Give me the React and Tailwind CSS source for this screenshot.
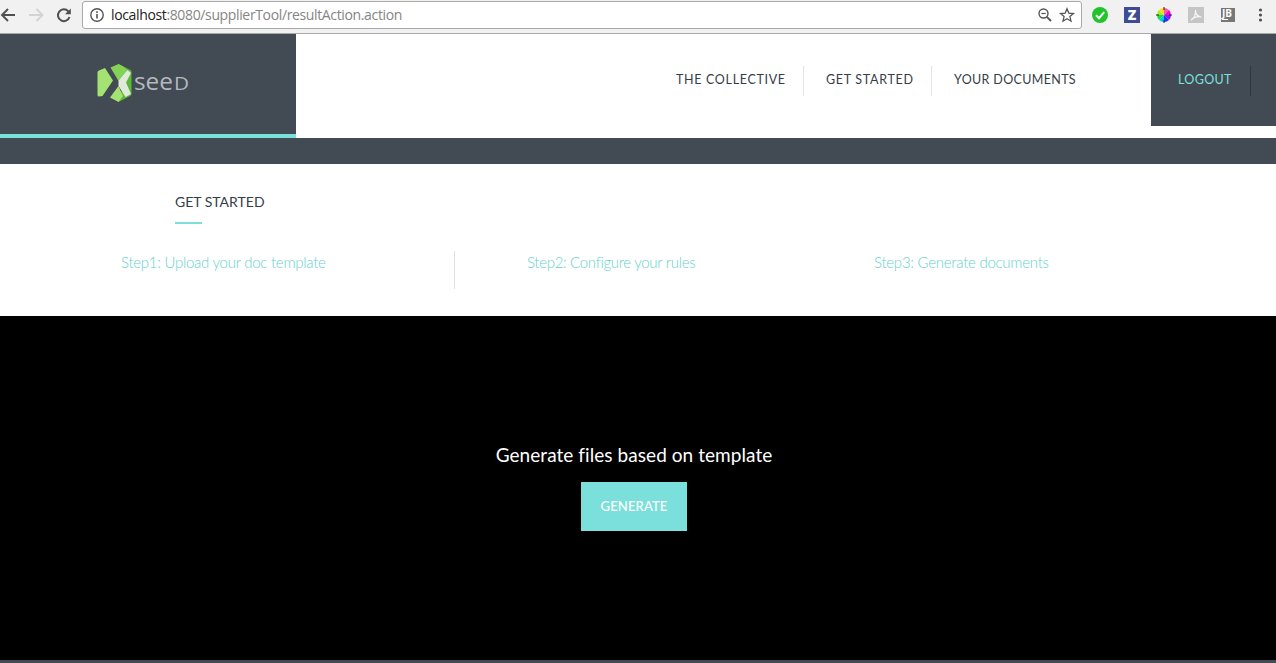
import React from "react";

function BrowserBar() {
  return (
    <div className="flex h-[34px] items-start border-b border-[#a9a9a9] bg-[#f1f1f1]">
      <svg className="h-[33px] w-[82px] shrink-0" viewBox="0 0 82 33" fill="none">
        <path d="M15 15H2.5M8 9L2 15L8 21" stroke="#505050" strokeWidth="1.9" />
        <path d="M29 15H42M36.500 9L42.500 15L36.500 21" stroke="#d3d3d3" strokeWidth="1.9" />
        <path d="M68.300 11.300A5.900 5.900 0 1 0 69.500 17" stroke="#505050" strokeWidth="2" />
        <path d="M70.800 8.500V14.300H65Z" fill="#505050" />
      </svg>
      <div className="mt-px flex h-[28px] w-[1000px] shrink-0 items-center rounded-[3px] border border-[#a9a9a9] bg-white">
        <svg className="ml-[6px] h-4 w-4 shrink-0" viewBox="0 0 16 16" fill="none">
          <circle cx="8" cy="8" r="6.200" stroke="#555" strokeWidth="1.400" />
          <path d="M8 7V11.500M8 4.300V5.900" stroke="#555" strokeWidth="1.600" />
        </svg>
        <span className="ml-[6px] whitespace-nowrap font-['Open_Sans',sans-serif] text-[14px] leading-[20px] tracking-[-0.36px] text-[#858585]">
          <span className="text-[#222]">localhost</span>:8080/supplierTool/resultAction.action
        </span>
        <svg className="-mr-px ml-auto h-[26px] w-[46px] shrink-0" viewBox="0 0 46 26" fill="none" stroke="#555">
          <circle cx="7.500" cy="11.500" r="4.500" strokeWidth="1.400" />
          <path d="M5.300 11.500H9.700" strokeWidth="1.200" />
          <path d="M10.800 14.800L15 19" strokeWidth="1.900" />
          <path d="M31 6.700L32.800 11.100L37.500 11.500L33.900 14.600L35 19.200L31 16.700L27 19.200L28.100 14.600L24.500 11.500L29.200 11.100Z" strokeWidth="1.300" />
        </svg>
      </div>
      <div className="ml-[10px] flex h-[30px] w-[184px] items-center">
        <svg className="h-4 w-4 shrink-0" viewBox="0 0 16 16">
          <circle cx="8" cy="8" r="8" fill="#21c52b" />
          <path d="M4 8.300L7 11.200L12.200 5.200" fill="none" stroke="#fff" strokeWidth="2" />
        </svg>
        <span className="ml-4 flex h-4 w-4 shrink-0 items-center justify-center bg-[#3f4b93] font-['Open_Sans',sans-serif] text-[14px] font-extrabold leading-none text-white">Z</span>
        <svg className="ml-4 h-4 w-4 shrink-0" viewBox="0 0 16 16">
          <path d="M8 8V1A7 7 0 0 1 13 3Z" fill="#ff5a9c" />
          <path d="M8 8L13 3A7 7 0 0 1 15 8Z" fill="#ff00d4" />
          <path d="M8 8H15A7 7 0 0 1 13 13Z" fill="#8b16ff" />
          <path d="M8 8L13 13A7 7 0 0 1 8 15Z" fill="#1739ff" />
          <path d="M8 8V15A7 7 0 0 1 3 13Z" fill="#00c8f0" />
          <path d="M8 8L3 13A7 7 0 0 1 1 8Z" fill="#18df4b" />
          <path d="M8 8H1A7 7 0 0 1 3 3Z" fill="#a8ee18" />
          <path d="M8 8L3 3A7 7 0 0 1 8 1Z" fill="#ffd52b" />
          <path d="M8 0V3M8 13V16M0 8H3M13 8H16" stroke="#222" />
        </svg>
        <svg className="ml-4 h-4 w-4 shrink-0" viewBox="0 0 16 16">
          <path d="M0 0H16V16H0Z" fill="#c5c5c5" />
          <path d="M3 13C6 12 8 7 7.500 3C7 7 10 10 13.500 10C10 9 6 10 3 13Z" fill="none" stroke="#f7f7f7" strokeWidth="1.200" />
        </svg>
        <span className="ml-[17px] flex h-[14px] w-[14px] shrink-0 flex-col bg-[#777] px-[1px] pt-[1px] font-['Open_Sans',sans-serif] text-white">
          <span className="h-[9px] text-[10px] font-bold leading-[9px]">JB</span>
          <span className="mt-[1px] h-px w-[6px] shrink-0 bg-white" />
        </span>
        <svg className="ml-[23px] h-4 w-[6px] shrink-0" viewBox="0 0 6 16" fill="#505050">
          <circle cx="2.500" cy="3" r="1.600" />
          <circle cx="2.500" cy="8" r="1.600" />
          <circle cx="2.500" cy="13" r="1.600" />
        </svg>
      </div>
    </div>
  );
}

function Logo() {
  return (
    <div className="flex h-[104px] w-[296px] shrink-0 items-start border-b-4 border-[#7be0dc] bg-[#424a53] pl-[96px] pt-[29px]">
      <svg className="h-[40px] w-[96px]" viewBox="0 0 96 40">
        <path d="M1.500 9.500Q1.500 8 3 7.500L9 5L17 17.500L6.500 33L3 33.500Q1.500 33.500 1.500 32Z" fill="#a4e272" />
        <path d="M22.500 1L34.500 7Q35.500 7.500 35.500 9V31Q35.500 32 34.500 32.700L22.500 39L28 20Z" fill="#5cb837" />
        <path d="M14 34.500L22.500 39L27 33L22.500 23Z" fill="#a4e272" />
        <path d="M31.500 7L35 10L30 19.500L35 31L29.500 34L22.500 23V17Z" fill="#e0eadb" />
        <path d="M22.500 18L31 7L28 4L22.500 1L14.500 4.500Z" fill="#85d356" />
        <text x="38" y="27" fill="#b5b9bd" fontFamily="'Open Sans', sans-serif" fontSize="24" textLength="39" lengthAdjust="spacingAndGlyphs">see</text>
        <text x="78" y="27" fill="#b5b9bd" fontFamily="'Open Sans', sans-serif" fontSize="19" textLength="15" lengthAdjust="spacingAndGlyphs">D</text>
      </svg>
    </div>
  );
}

function Header() {
  return (
    <header className="flex h-[104px] items-start bg-white font-[Lato,sans-serif] text-[12.5px] font-normal leading-[16px] text-[#353d47]">
      <Logo />
      <nav className="flex flex-1 items-center whitespace-nowrap pl-[380px] pt-[32px]">
        <a className="flex h-[30px] w-[128px] items-center border-r border-[#e5e5e5] pb-[2px] tracking-[0.67px]">THE COLLECTIVE</a>
        <a className="flex h-[30px] w-[128px] items-center border-r border-[#e5e5e5] pb-[2px] pl-[22px] tracking-[0.7px]">GET STARTED</a>
        <a className="flex h-[30px] items-center pb-[2px] pl-[22px] tracking-[0.35px]">YOUR DOCUMENTS</a>
      </nav>
      <div className="h-[92px] w-[125px] shrink-0 bg-[#424a53] pl-[27px] pt-[32px]">
        <a className="flex h-[30px] w-[73px] items-center border-r border-[#30363d] pb-[2px] tracking-[0.35px] text-[#7be0dc]">LOGOUT</a>
      </div>
    </header>
  );
}

function Steps() {
  return (
    <section className="h-[152px] bg-white pt-[28px] font-[Lato,sans-serif]">
      <div className="ml-[175px]">
        <h2 className="text-[14px] leading-[20px] text-[#353d47]">GET STARTED</h2>
        <div className="mt-[10px] h-[2px] w-[27px] bg-[#7be0dc]" />
      </div>
      <div className="mt-[27px] flex h-[38px] whitespace-nowrap pl-[121px] text-[15px] font-light leading-[22px] text-[#66d2cd]">
        <div className="w-[334px] border-r border-[#e2e2e2] tracking-[-0.26px]">Step1: Upload your doc template</div>
        <div className="w-[347px] pl-[72px] tracking-[-0.31px]">Step2: Configure your rules</div>
        <div className="pl-[72px] tracking-[-0.25px]">Step3: Generate documents</div>
      </div>
    </section>
  );
}

export default function App() {
  return (
    <div className="flex h-[663px] w-[1276px] flex-col overflow-hidden bg-white">
      <BrowserBar />
      <Header />
      <div className="h-[26px] bg-[#424a53]" />
      <Steps />
      <section className="flex h-[344px] flex-col items-center bg-black pr-[8px] pt-[126px] font-[Lato,sans-serif] text-white">
        <p className="whitespace-nowrap text-[19px] leading-[26px] tracking-[0.06px]">Generate files based on template</p>
        <button className="mt-[14px] h-[49px] w-[106px] bg-[#7be0dc] text-[13px] font-medium tracking-[0.15px]">GENERATE</button>
      </section>
      <div className="h-[3px] bg-[#424a53]" />
    </div>
  );
}
